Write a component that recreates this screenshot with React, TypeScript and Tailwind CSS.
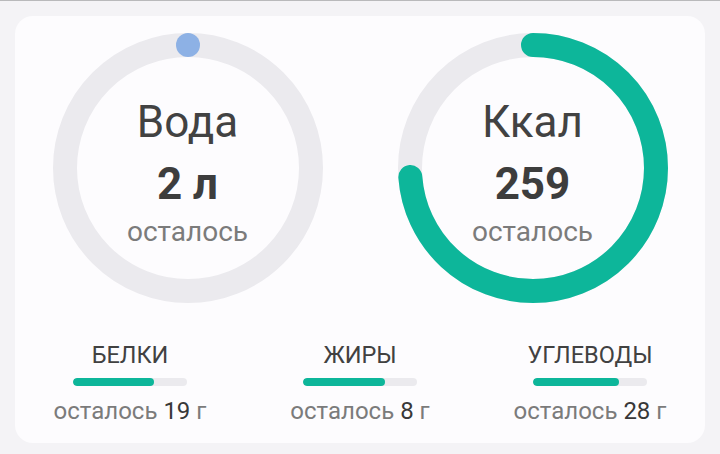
import React from "react";

const R = 123;
const STROKE = 24;
const SIZE = 272;
const CIRC = 2 * Math.PI * R;

function Ring({
  title,
  value,
  progress,
  color,
}: {
  title: string;
  value: string;
  progress: number;
  color: string;
}) {
  const c = SIZE / 2;
  return (
    <div className="relative h-[272px] w-[272px]">
      <svg width={SIZE} height={SIZE} viewBox={`0 0 ${SIZE} ${SIZE}`}>
        <circle cx={c} cy={c} r={R} fill="none" stroke="#ebeaee" strokeWidth={STROKE} />
        {progress > 0 ? (
          <circle
            cx={c}
            cy={c}
            r={R}
            fill="none"
            stroke={color}
            strokeWidth={STROKE}
            strokeLinecap="round"
            strokeDasharray={`${CIRC * progress} ${CIRC}`}
            transform={`rotate(-90 ${c} ${c})`}
          />
        ) : (
          // nothing consumed yet: only the round cap shows at the top
          <circle cx={c} cy={c - R} r={STROKE / 2} fill={color} />
        )}
      </svg>
      <div className="absolute inset-0 flex flex-col items-center pt-[65px]">
        <div className="text-[44px] leading-[50px] text-[#424242]">{title}</div>
        <div className="mt-[12px] text-[44px] font-bold leading-[50px] text-[#3d3d3d]">
          {value}
        </div>
        <div className="mt-[7px] text-[28px] leading-[32px] text-[#7b7b7b]">осталось</div>
      </div>
    </div>
  );
}

function Macro({ name, left, progress }: { name: string; left: number; progress: number }) {
  return (
    <div className="flex flex-col items-center">
      <div className="text-[23.5px] leading-[28px] text-[#414141]">{name}</div>
      <div className="mt-[9px] h-[8px] w-[114px] overflow-hidden rounded-full bg-[#ebeaee]">
        <div className="h-full rounded-full bg-[#0db69a]" style={{ width: `${progress * 100}%` }} />
      </div>
      <div className="mt-[11px] text-[24px] leading-[28px] text-[#7b7b7b]">
        осталось <span className="text-[#383838]">{left}</span> г
      </div>
    </div>
  );
}

export default function App() {
  return (
    <div
      className="h-[454px] w-[720px] bg-[#f4f3f6]"
      style={{ fontFamily: "Roboto, 'Noto Sans', sans-serif" }}
    >
      <div className="h-px bg-[#b9b9bb]" />
      <div className="px-[15px] pt-[15px]">
        <div className="rounded-[18px] bg-[#fdfcfe] pb-[18px] pt-[16px]">
          <div className="grid grid-cols-2">
            <div className="flex justify-center">
              <Ring title="Вода" value="2 л" progress={0} color="#8db1e5" />
            </div>
            <div className="flex justify-center">
              <Ring title="Ккал" value="259" progress={0.738} color="#0db69a" />
            </div>
          </div>
          <div className="mt-[37px] grid grid-cols-3">
            <Macro name="БЕЛКИ" left={19} progress={0.71} />
            <Macro name="ЖИРЫ" left={8} progress={0.72} />
            <Macro name="УГЛЕВОДЫ" left={28} progress={0.75} />
          </div>
        </div>
      </div>
    </div>
  );
}
